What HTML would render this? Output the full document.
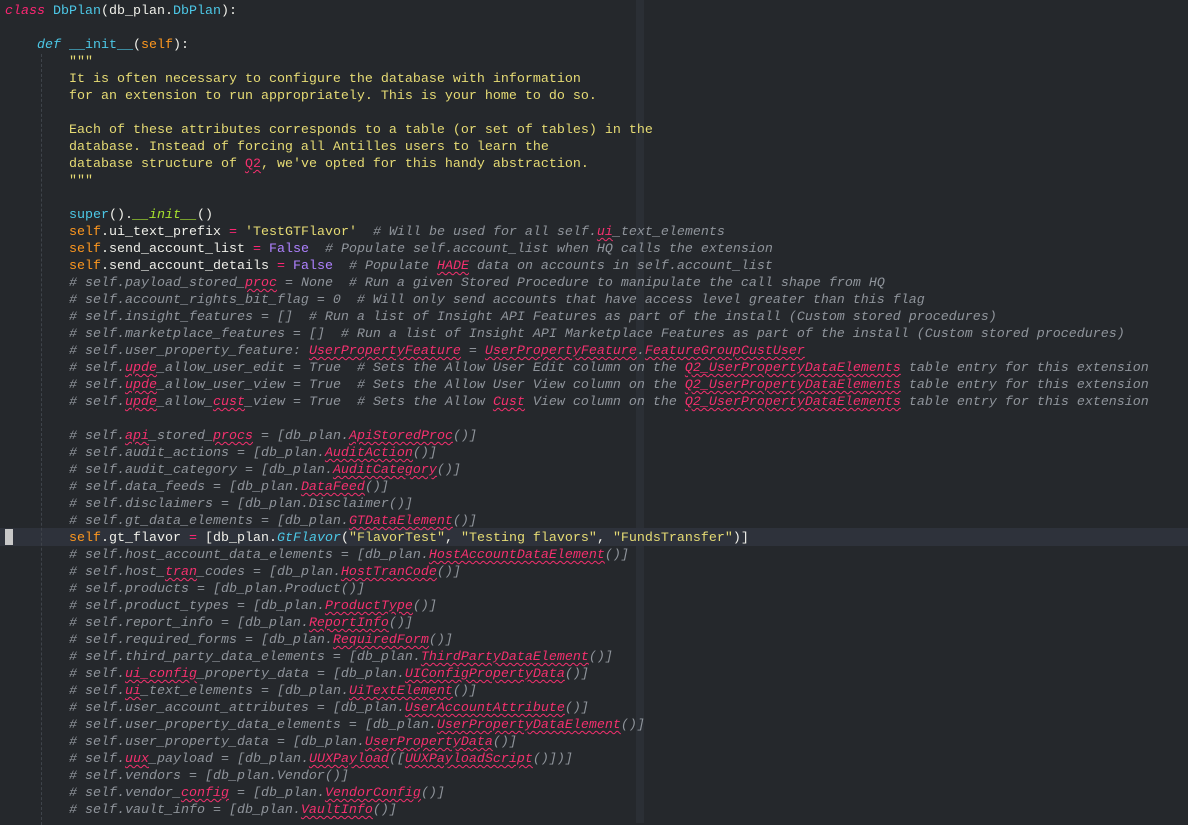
<!DOCTYPE html>
<html><head><meta charset="utf-8"><style>
html,body{margin:0;padding:0;width:1188px;height:823px;overflow:hidden;background:#25282c;}
#ruler{position:absolute;left:636px;top:0;width:8px;height:823px;background:#2b2f35;}
#hl{position:absolute;left:0;top:528px;width:1188px;height:18px;background:#2e323b;}
#cur{position:absolute;left:5px;top:529px;width:8px;height:16px;background:#c8c8c8;}
#guide{position:absolute;left:41px;top:54px;height:771px;border-left:1px dashed #3e434a;}
pre{position:absolute;left:5px;top:3px;margin:0;font-family:"Liberation Mono",monospace;font-size:13.34px;line-height:17px;color:#f0f0ea;}
.k{color:#f92672;font-style:italic}
.t{color:#4cc7e6}
.ti{color:#4cc7e6;font-style:italic}
.s{color:#fd971f}
.y{color:#e6db74}
.p{color:#f92672}
.f{color:#ae81ff}
.g{color:#a6e22e;font-style:italic}
.c{color:#8f949b;font-style:italic}
.u{color:#f4306e;text-decoration:underline wavy #f4306e;text-decoration-thickness:1px;text-underline-offset:2px}
.ud{color:#f4306e;text-decoration:underline wavy #f4306e;text-decoration-thickness:1px;text-underline-offset:2px}
</style></head><body>
<div id="ruler"></div><div id="hl"></div><div id="cur"></div><div id="guide"></div>
<pre><span class="k">class</span> <span class="t">DbPlan</span>(db_plan.<span class="t">DbPlan</span>):

    <span class="ti">def</span> <span class="t">__init__</span>(<span class="s">self</span>):
<span class="y">        """
        It is often necessary to configure the database with information
        for an extension to run appropriately. This is your home to do so.

        Each of these attributes corresponds to a table (or set of tables) in the
        database. Instead of forcing all Antilles users to learn the
        database structure of <span class="ud">Q2</span>, we've opted for this handy abstraction.
        """</span>

        <span class="t">super</span>().<span class="g">__init__</span>()
        <span class="s">self</span>.ui_text_prefix <span class="p">=</span> <span class="y">'TestGTFlavor'</span>  <span class="c"># Will be used for all self.<span class="u">ui</span>_text_elements</span>
        <span class="s">self</span>.send_account_list <span class="p">=</span> <span class="f">False</span>  <span class="c"># Populate self.account_list when HQ calls the extension</span>
        <span class="s">self</span>.send_account_details <span class="p">=</span> <span class="f">False</span>  <span class="c"># Populate <span class="u">HADE</span> data on accounts in self.account_list</span>
<span class="c">        # self.payload_stored_<span class="u">proc</span> = None  # Run a given Stored Procedure to manipulate the call shape from HQ
        # self.account_rights_bit_flag = 0  # Will only send accounts that have access level greater than this flag
        # self.insight_features = []  # Run a list of Insight API Features as part of the install (Custom stored procedures)
        # self.marketplace_features = []  # Run a list of Insight API Marketplace Features as part of the install (Custom stored procedures)
        # self.user_property_feature: <span class="u">UserPropertyFeature</span> = <span class="u">UserPropertyFeature</span>.<span class="u">FeatureGroupCustUser</span>
        # self.<span class="u">upde</span>_allow_user_edit = True  # Sets the Allow User Edit column on the <span class="u">Q2_UserPropertyDataElements</span> table entry for this extension
        # self.<span class="u">upde</span>_allow_user_view = True  # Sets the Allow User View column on the <span class="u">Q2_UserPropertyDataElements</span> table entry for this extension
        # self.<span class="u">upde</span>_allow_<span class="u">cust</span>_view = True  # Sets the Allow <span class="u">Cust</span> View column on the <span class="u">Q2_UserPropertyDataElements</span> table entry for this extension

        # self.<span class="u">api</span>_stored_<span class="u">procs</span> = [db_plan.<span class="u">ApiStoredProc</span>()]
        # self.audit_actions = [db_plan.<span class="u">AuditAction</span>()]
        # self.audit_category = [db_plan.<span class="u">AuditCategory</span>()]
        # self.data_feeds = [db_plan.<span class="u">DataFeed</span>()]
        # self.disclaimers = [db_plan.Disclaimer()]
        # self.gt_data_elements = [db_plan.<span class="u">GTDataElement</span>()]</span>
        <span class="s">self</span>.gt_flavor <span class="p">=</span> [db_plan.<span class="ti">GtFlavor</span>(<span class="y">"FlavorTest"</span>, <span class="y">"Testing flavors"</span>, <span class="y">"FundsTransfer"</span>)]
<span class="c">        # self.host_account_data_elements = [db_plan.<span class="u">HostAccountDataElement</span>()]
        # self.host_<span class="u">tran</span>_codes = [db_plan.<span class="u">HostTranCode</span>()]
        # self.products = [db_plan.Product()]
        # self.product_types = [db_plan.<span class="u">ProductType</span>()]
        # self.report_info = [db_plan.<span class="u">ReportInfo</span>()]
        # self.required_forms = [db_plan.<span class="u">RequiredForm</span>()]
        # self.third_party_data_elements = [db_plan.<span class="u">ThirdPartyDataElement</span>()]
        # self.<span class="u">ui_config</span>_property_data = [db_plan.<span class="u">UIConfigPropertyData</span>()]
        # self.<span class="u">ui</span>_text_elements = [db_plan.<span class="u">UiTextElement</span>()]
        # self.user_account_attributes = [db_plan.<span class="u">UserAccountAttribute</span>()]
        # self.user_property_data_elements = [db_plan.<span class="u">UserPropertyDataElement</span>()]
        # self.user_property_data = [db_plan.<span class="u">UserPropertyData</span>()]
        # self.<span class="u">uux</span>_payload = [db_plan.<span class="u">UUXPayload</span>([<span class="u">UUXPayloadScript</span>()])]
        # self.vendors = [db_plan.Vendor()]
        # self.vendor_<span class="u">config</span> = [db_plan.<span class="u">VendorConfig</span>()]
        # self.vault_info = [db_plan.<span class="u">VaultInfo</span>()]</span>
</pre>
</body></html>
